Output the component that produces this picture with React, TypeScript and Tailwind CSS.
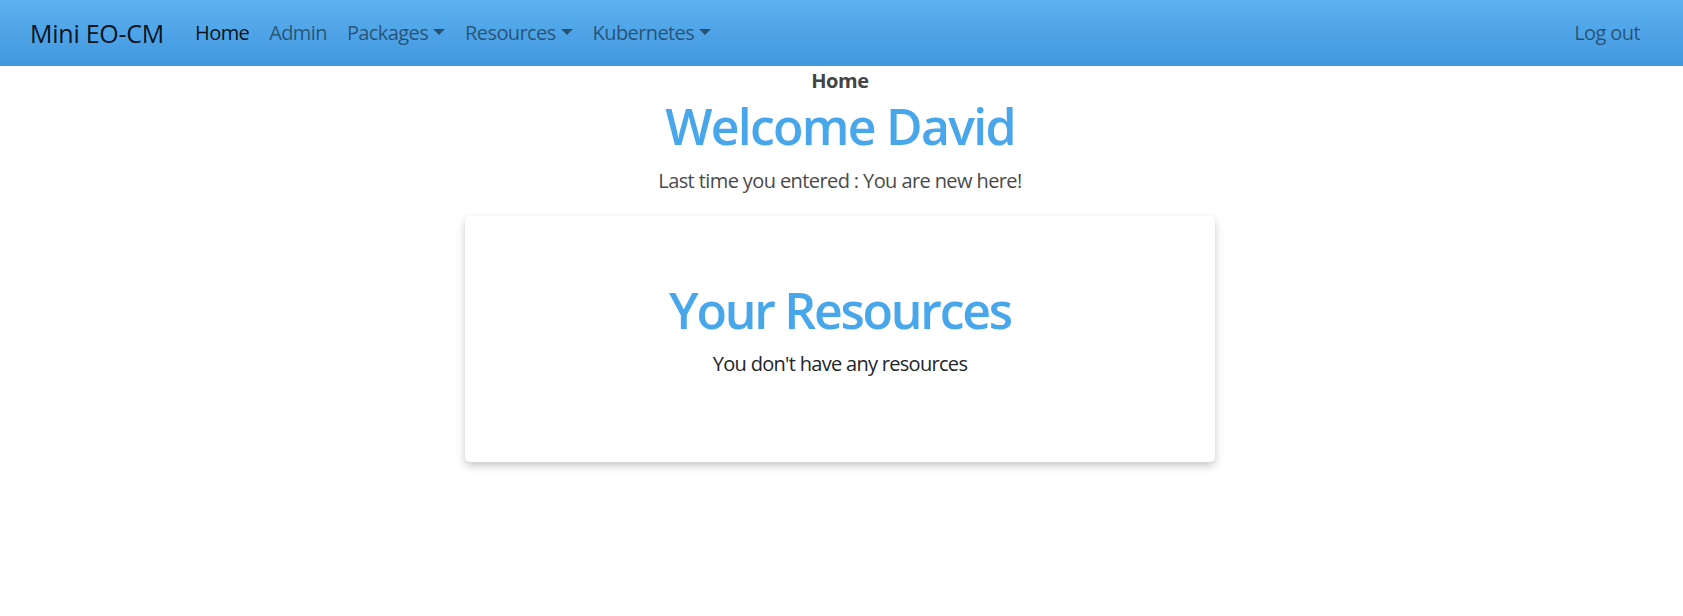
import React from "react";

const Caret = () => (
  <span className="inline-block ml-[5px] align-[5px] w-0 h-0 border-t-[6px] border-t-current border-x-[6px] border-x-transparent" />
);

export default function App() {
  return (
    <div className="min-h-[616px] bg-white" style={{ fontFamily: '"Open Sans", "Noto Sans", sans-serif' }}>
      <nav className="h-[66px] flex items-center pl-[30px] pr-[43px] bg-gradient-to-b from-[#5bb0ee] to-[#4298df]">
        <span className="text-[25px] leading-[30px] tracking-[-0.01em] text-black/90 mr-[31px]">Mini EO-CM</span>
        <div className="flex items-center gap-[20px] text-[20px] leading-[30px] tracking-[-0.03em]">
          <span className="text-black/90">Home</span>
          <span className="text-black/50">Admin</span>
          <span className="text-black/50">Packages<Caret /></span>
          <span className="text-black/50">Resources<Caret /></span>
          <span className="text-black/50">Kubernetes<Caret /></span>
        </div>
        <span className="ml-auto text-[20px] leading-[30px] tracking-[-0.03em] text-black/50">Log out</span>
      </nav>
      <main className="flex flex-col items-center pr-[3px]">
        <div className="text-[20px] leading-[30px] font-bold tracking-[-0.02em] text-[#444]">Home</div>
        <h1 className="text-[50px] leading-[60px] font-semibold tracking-[-0.035em] text-[#48a6eb]">Welcome David</h1>
        <p className="mt-[10px] text-[20px] leading-[30px] tracking-[-0.03em] text-[#4a4a4a]">Last time you entered : You are new here!</p>
        <div className="mt-[20px] w-[750px] h-[246px] rounded-[5px] bg-white shadow-[0_4px_8px_0_rgba(0,0,0,0.22)] flex flex-col items-center pt-[64px]">
          <h2 className="text-[50px] leading-[60px] font-semibold tracking-[-0.045em] text-[#48a6eb]">Your Resources</h2>
          <p className="mt-[9px] text-[20px] leading-[30px] tracking-[-0.035em] text-[#212529]">You don't have any resources</p>
        </div>
      </main>
    </div>
  );
}
